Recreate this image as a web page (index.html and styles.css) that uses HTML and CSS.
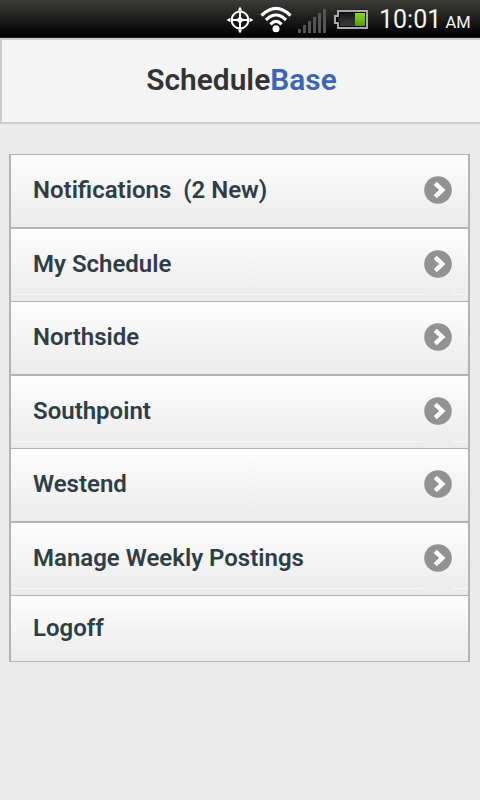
FILE: index.html
```html
<!DOCTYPE html>
<html lang="en">
<head>
  <meta charset="UTF-8" />
  <title>ScheduleBase</title>
  <meta name="viewport" content="width=device-width, initial-scale=1" />
  <link rel="stylesheet" href="styles.css">
</head>
<body>

  <!-- Icon shared by the menu rows -->
  <svg class="defs" width="0" height="0">
    <symbol id="arrow" viewBox="0 0 28 28">
      <circle cx="14" cy="14" r="13.8" fill="#929292" />
      <path d="M11.2 7.4 L18.3 14 L11.2 20.6" fill="none" stroke="#fff" stroke-width="4.4" />
    </symbol>
  </svg>

  <!-- Status bar -->
  <div class="status-bar">
    <svg class="gps" width="28" height="28" viewBox="0 0 28 28">
      <g fill="none" stroke="#fff">
        <circle cx="14" cy="14" r="8.4" stroke-width="2" />
        <path d="M14 6V22M6 14H22" stroke-width="2" />
      </g>
      <path d="M14 .5L16.2 4.4H11.8zM14 27.5L16.2 23.6H11.8zM.5 14L4.4 11.8V16.2zM27.5 14L23.6 11.8V16.2z" fill="#fff" />
      <circle cx="14" cy="14" r="2.8" fill="#fff" />
    </svg>
    <svg class="wifi" width="32" height="27" viewBox="0 0 32 27">
      <g fill="none" stroke="#fff" stroke-width="3.2">
        <path d="M1.5 9.5Q16 -5 30.5 9.5" />
        <path d="M6 14Q16 4 26 14" />
        <path d="M10.5 18.3Q16 12.5 21.5 18.3" />
      </g>
      <circle cx="16" cy="22.7" r="3.5" fill="#fff" />
    </svg>
    <svg class="signal" width="28" height="24" viewBox="0 0 28 24">
      <path d="M0 20h3v4H0zM5 16h3v8H5zM10 12h3v12h-3zM15 8h3v16h-3zM20 4h3v20h-3zM25 0h3v24h-3z" fill="#555" />
    </svg>
    <svg class="battery" width="34" height="19" viewBox="0 0 34 19">
      <defs>
        <linearGradient id="charge" x2="0" y2="1">
          <stop offset="0" stop-color="#8fce2c" />
          <stop offset=".5" stop-color="#74bd12" />
          <stop offset="1" stop-color="#4c9800" />
        </linearGradient>
        <linearGradient id="cell" x2="0" y2="1">
          <stop offset="0" stop-color="#161616" />
          <stop offset=".5" stop-color="#2c2c2c" />
          <stop offset="1" stop-color="#383838" />
        </linearGradient>
      </defs>
      <path d="M4 1H33V18H4V13H1V6H4z" fill="#0a0a0a" stroke="#aaa" stroke-width="2" />
      <path d="M6 3H21V16H6V11H4V8H6z" fill="url(#cell)" />
      <path d="M21 3h10v13H21z" fill="url(#charge)" />
    </svg>
    <div class="clock">10:01 <span class="ampm">AM</span></div>
  </div>

  <div class="header">
    <h1>Schedule<span class="base">Base</span></h1>
  </div>

  <ul class="menu">
    <li>Notifications&nbsp; (2 New)<svg class="arrow"><use href="#arrow" /></svg></li>
    <li>My Schedule<svg class="arrow"><use href="#arrow" /></svg></li>
    <li>Northside<svg class="arrow"><use href="#arrow" /></svg></li>
    <li>Southpoint<svg class="arrow"><use href="#arrow" /></svg></li>
    <li>Westend<svg class="arrow"><use href="#arrow" /></svg></li>
    <li>Manage Weekly Postings<svg class="arrow"><use href="#arrow" /></svg></li>
    <li class="logoff">Logoff</li>
  </ul>

</body>
</html>
```
FILE: styles.css
```css
* {
  margin: 0;
  padding: 0;
  box-sizing: border-box;
}

body, html {
  height: 100%;
  font-family: Roboto, sans-serif;
  background: #ebebeb;
  overflow: hidden;
}

.defs {
  display: none;
}

.status-bar {
  display: flex;
  align-items: flex-start;
  height: 38px;
  padding-left: 226px;
  background: linear-gradient(#3b3b39, #1e1e1d 50%, #000 95%);
  border-bottom: 1px solid #1c1c1c;
}

.gps {
  margin-top: 6px;
}

.wifi {
  margin: 6px 0 0 6px;
}

.signal {
  margin: 9px 0 0 6px;
}

.battery {
  margin: 10px 0 0 8px;
}

.clock {
  margin-left: 11px;
  color: #f4f4f4;
  font-size: 25px;
  line-height: 40px;
  white-space: nowrap;
}

.ampm {
  margin-left: -2px;
  font-size: 16.5px;
}

.header {
  height: 86px;
  background: #f4f4f4;
  border: 2px solid #ccc;
  border-right: none;
  text-align: center;
}

h1 {
  padding-left: 1px;
  color: #333;
  font-size: 29.9px;
  font-weight: 600;
  line-height: 79px;
}

.base {
  color: #3c66b4;
}

.menu {
  margin: 30px 10px 0 9px;
  border: 2px solid #b3b3b3;
  border-width: 1px 2px 0;
  list-style: none;
}

.menu li {
  display: flex;
  align-items: center;
  justify-content: space-between;
  height: 74px;
  padding: 0 16px 2px 22px;
  background: linear-gradient(#fdfdfd, #ebebeb);
  border-bottom: 2px solid #b3b3b3;
  color: #2f3e46;
  font-size: 24px;
  font-weight: 600;
}

/* light line near the bottom, broken under the arrow */
.menu li:nth-child(even) {
  height: 73px;
  border-bottom-width: 1px;
  background:
    linear-gradient(#f7f7f7, #f7f7f7) 0 65px / 412px 1px no-repeat,
    linear-gradient(#f7f7f7, #f7f7f7) right 65px / 15px 1px no-repeat,
    linear-gradient(#fdfdfd, #ebebeb);
}

.menu .logoff {
  height: 66px;
  border-bottom-width: 1px;
}

.arrow {
  width: 28px;
  height: 28px;
  margin-bottom: 1px;
}
```
